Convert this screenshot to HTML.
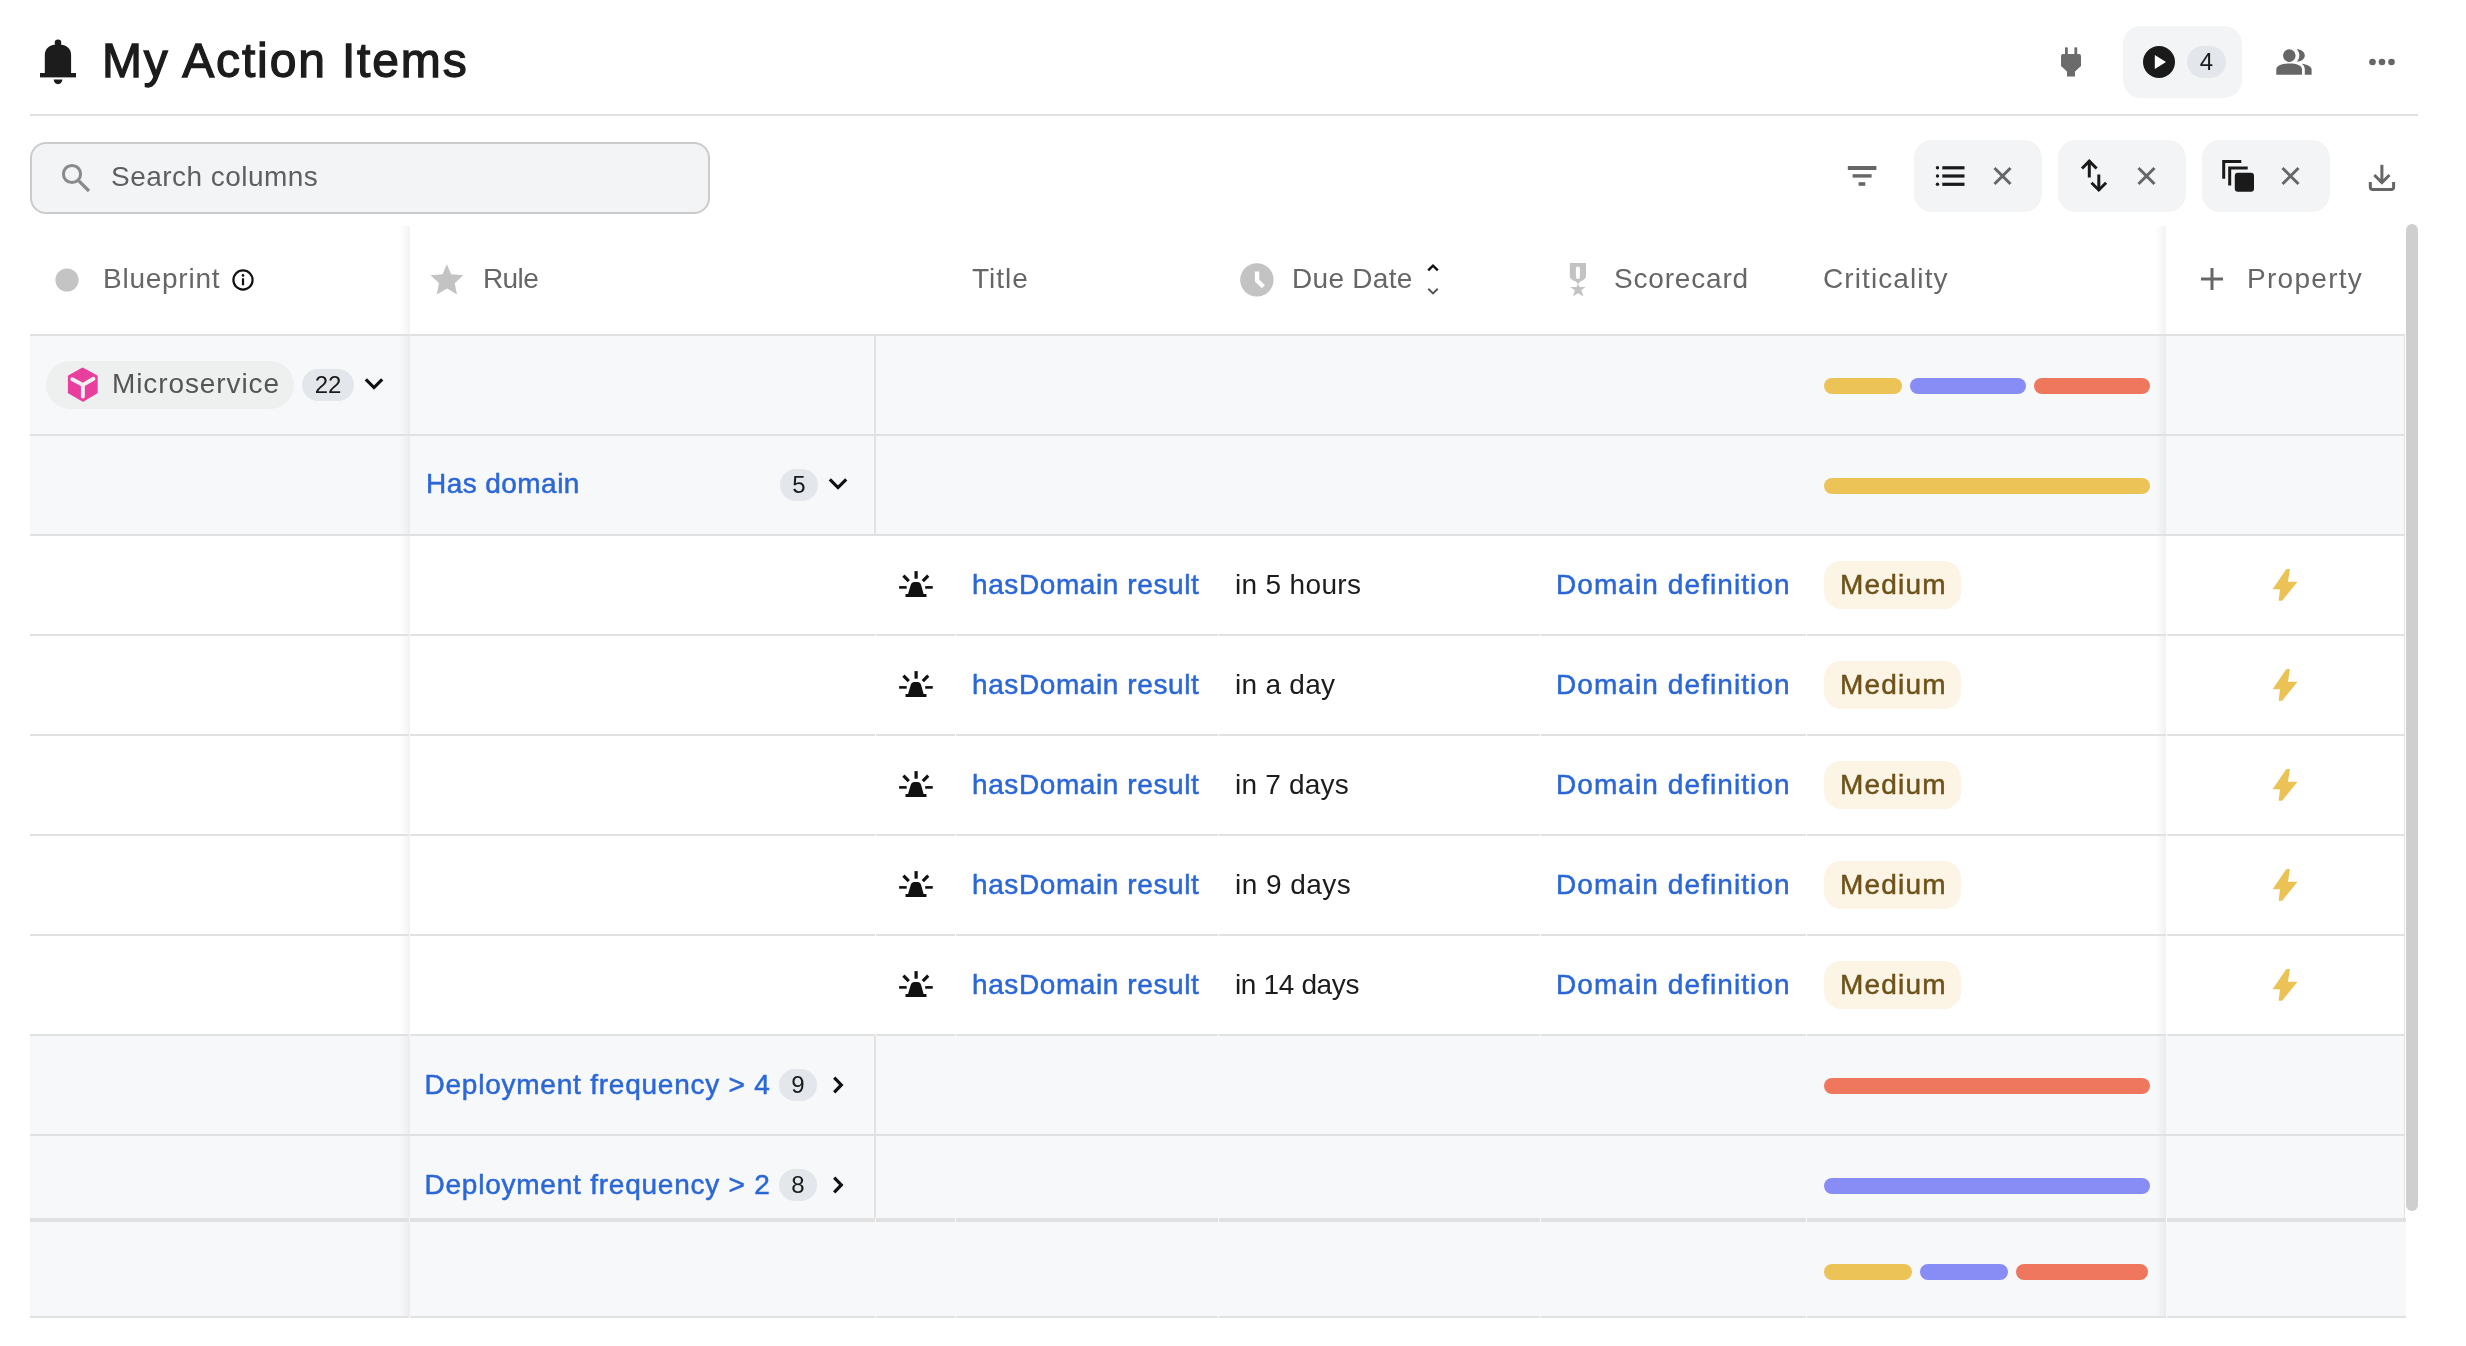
<!DOCTYPE html>
<html><head><meta charset="utf-8">
<style>
*{box-sizing:border-box;margin:0;padding:0}
html,body{width:2466px;height:1346px;overflow:hidden;background:#fff}
#root{will-change:transform;position:relative;width:2466px;height:1346px;overflow:hidden;background:#fff;font-family:"Liberation Sans",sans-serif}
.a{position:absolute}
.t{position:absolute;white-space:nowrap;line-height:1;font-size:28px;font-family:"Liberation Sans",sans-serif}
.hd{color:#666666}
.lk{color:#2b67d6;-webkit-text-stroke:0.5px #2b67d6}
.dk{color:#1c1c1c}
.grp{position:absolute;left:30px;width:2375px;height:100px;background:#f7f8fa}
.row{position:absolute;left:30px;width:2375px;height:100px;background:#fff}
.bd{position:absolute;left:30px;width:2375px;height:2px;background:#e1e1e2}
.bar{position:absolute;height:16px;border-radius:8px}
.y{background:#ecc356}.b{background:#888cf5}.r{background:#ee775d}
.chip{position:absolute;top:140px;height:72px;width:128px;border-radius:18px;background:#f3f4f6}
.badge{position:absolute;height:32px;border-radius:16px;background:#e3e6ea;color:#1a1a1a;font-size:24px;line-height:32px;text-align:center}
.med{position:absolute;left:1824px;width:137px;height:48px;border-radius:17px;background:#fcf5e6}
.shL{position:absolute;width:10px;background:linear-gradient(to right,rgba(0,0,0,0),rgba(0,0,0,0.05))}
</style></head>
<body><div id="root">

<!-- ===== Top header ===== -->
<svg class="a" style="left:38px;top:38px" width="40" height="48" viewBox="0 0 40 48">
  <circle cx="20" cy="4.8" r="3.3" fill="#1c1c1c"/>
  <path d="M6.8 35 V17 C6.8 10 12.5 6.3 20 6.3 C27.5 6.3 33.1 10 33.1 17 V35 Z" fill="#1c1c1c"/>
  <rect x="2" y="35" width="36" height="4.4" fill="#1c1c1c"/>
  <path d="M15.6 41.6 H24.5 C24 44.6 22.3 46.2 20 46.2 C17.7 46.2 16 44.6 15.6 41.6 Z" fill="#1c1c1c"/>
</svg>
<div class="t dk" style="left:102px;top:37px;font-size:48px;font-weight:400;color:#1c1c1c;-webkit-text-stroke:1.3px #1c1c1c;letter-spacing:1.85px">My Action Items</div>

<!-- plug -->
<svg class="a" style="left:2060px;top:46px" width="24" height="32" viewBox="0 0 24 32">
  <rect x="5" y="1.4" width="2.8" height="8" fill="#6b6b6b"/>
  <rect x="14.4" y="1.4" width="2.8" height="8" fill="#6b6b6b"/>
  <path d="M1 10 Q1 8 3 8 H19 Q21 8 21 10 V20 L15 25.4 V30.4 H7 V25.4 L1 20 Z" fill="#6b6b6b"/>
</svg>
<!-- play chip -->
<div class="a" style="left:2123px;top:26px;width:119px;height:72px;border-radius:18px;background:#f3f4f6"></div>
<svg class="a" style="left:2143px;top:46px" width="32" height="32" viewBox="0 0 32 32">
  <circle cx="16" cy="16" r="16" fill="#1a1a1a"/>
  <path d="M11.8 9 L23 16 L11.8 23 Z" fill="#fff"/>
</svg>
<div class="badge" style="left:2187px;top:46px;width:39px;">4</div>
<!-- people -->
<svg class="a" style="left:2274px;top:46px" width="40" height="32" viewBox="0 0 40 32">
  <circle cx="15.3" cy="9.6" r="6.3" fill="#666"/>
  <path d="M2.3 28.7 V23.5 C2.3 19.6 8 17.6 15.3 17.6 C22.6 17.6 28 19.6 28 23.5 V28.7 Z" fill="#666"/>
  <path d="M22.8 3.3 C27 3.3 30.8 6 30.8 9.6 C30.8 13.2 27 15.8 22.8 15.8 C24.5 14 25.3 12 25.3 9.6 C25.3 7.2 24.5 5.2 22.8 3.3 Z" fill="#666"/>
  <path d="M27.8 17.8 C32.6 18.6 37.6 20.3 37.6 23.5 V28.7 H30.8 V23.5 C30.8 21 29.8 19.2 27.8 17.8 Z" fill="#666"/>
</svg>
<!-- more dots -->
<svg class="a" style="left:2366px;top:56px" width="32" height="12" viewBox="0 0 32 12">
  <circle cx="6.5" cy="6" r="3.3" fill="#666"/><circle cx="16" cy="6" r="3.3" fill="#666"/><circle cx="25.5" cy="6" r="3.3" fill="#666"/>
</svg>

<div class="a" style="left:30px;top:114px;width:2388px;height:2px;background:#e2e2e2"></div>

<!-- ===== Toolbar ===== -->
<div class="a" style="left:30px;top:142px;width:680px;height:72px;border:2px solid #cbcbcb;border-radius:16px;background:#f3f4f6"></div>
<svg class="a" style="left:58px;top:160px" width="36" height="36" viewBox="0 0 36 36">
  <circle cx="14" cy="14" r="8.6" fill="none" stroke="#8a8a8a" stroke-width="3"/>
  <path d="M20.3 20.3 L31 31" stroke="#8a8a8a" stroke-width="3.2"/>
</svg>
<div class="t" style="left:111px;top:163px;color:#5f5f5f;letter-spacing:0.46px">Search columns</div>

<!-- filter icon -->
<svg class="a" style="left:1846px;top:162px" width="32" height="28" viewBox="0 0 32 28">
  <rect x="1.8" y="4" width="28.6" height="4" fill="#666"/>
  <rect x="6.6" y="12.2" width="19" height="3.4" fill="#666"/>
  <rect x="12.6" y="20.2" width="6.7" height="3.6" fill="#666"/>
</svg>
<div class="chip" style="left:1914px"></div>
<svg class="a" style="left:1932px;top:160px" width="36" height="32" viewBox="0 0 36 32">
  <circle cx="5.5" cy="7.8" r="1.7" fill="#1a1a1a"/><circle cx="5.5" cy="16" r="1.7" fill="#1a1a1a"/><circle cx="5.5" cy="24.3" r="1.7" fill="#1a1a1a"/>
  <rect x="10.3" y="6.2" width="22.2" height="3.2" fill="#1a1a1a"/>
  <rect x="10.3" y="14.4" width="22.2" height="3.2" fill="#1a1a1a"/>
  <rect x="10.3" y="22.7" width="22.2" height="3.2" fill="#1a1a1a"/>
</svg>
<svg class="a" style="left:1990px;top:164px" width="24" height="24" viewBox="0 0 24 24">
  <path d="M4.5 4 L20.5 20 M20.5 4 L4.5 20" stroke="#666" stroke-width="3"/>
</svg>
<div class="chip" style="left:2058px"></div>
<svg class="a" style="left:2078px;top:158px" width="32" height="36" viewBox="0 0 32 36">
  <path d="M11.3 2.5 L11.3 19.5" stroke="#1a1a1a" stroke-width="3"/>
  <path d="M4 10.5 L11.3 3.2 L18.6 10.5" fill="none" stroke="#1a1a1a" stroke-width="3"/>
  <path d="M20.8 16.5 L20.8 32.5" stroke="#1a1a1a" stroke-width="3"/>
  <path d="M13.5 24.8 L20.8 32 L28.1 24.8" fill="none" stroke="#1a1a1a" stroke-width="3"/>
</svg>
<svg class="a" style="left:2134px;top:164px" width="24" height="24" viewBox="0 0 24 24">
  <path d="M4.5 4 L20.5 20 M20.5 4 L4.5 20" stroke="#666" stroke-width="3"/>
</svg>
<div class="chip" style="left:2202px"></div>
<svg class="a" style="left:2220px;top:158px" width="36" height="36" viewBox="0 0 36 36">
  <path d="M3.7 20.8 V3.5 H21.3" fill="none" stroke="#1a1a1a" stroke-width="3"/>
  <path d="M9.7 27.5 V10 H27.7" fill="none" stroke="#1a1a1a" stroke-width="3"/>
  <rect x="14.8" y="14.8" width="19.2" height="19" rx="3" fill="#1a1a1a"/>
</svg>
<svg class="a" style="left:2278px;top:164px" width="24" height="24" viewBox="0 0 24 24">
  <path d="M4.5 4 L20.5 20 M20.5 4 L4.5 20" stroke="#666" stroke-width="3"/>
</svg>
<!-- download -->
<svg class="a" style="left:2366px;top:162px" width="32" height="32" viewBox="0 0 32 32">
  <path d="M15.9 2.8 V20" stroke="#666" stroke-width="3"/>
  <path d="M8.3 13 L15.9 20.6 L23.5 13" fill="none" stroke="#666" stroke-width="3"/>
  <path d="M4.3 20 V25 C4.3 26.6 5.2 27.4 6.8 27.4 H25.1 C26.7 27.4 27.6 26.6 27.6 25 V20" fill="none" stroke="#666" stroke-width="3"/>
</svg>

<!-- ===== Table ===== -->
<!--TABLE-->
<div class="bd" style="top:334px"></div>
<div class="shL" style="left:400px;top:226px;height:108px"></div>
<div class="shL" style="left:2156px;top:226px;height:108px"></div>
<svg class="a" style="left:55px;top:268px" width="24" height="24" viewBox="0 0 24 24"><circle cx="12" cy="12" r="11.6" fill="#c4c4c4"/></svg>
<div class="t hd" style="left:103px;top:265px;letter-spacing:0.75px">Blueprint</div>
<svg class="a" style="left:231px;top:268px" width="24" height="24" viewBox="0 0 24 24"><circle cx="12" cy="12" r="9.6" fill="none" stroke="#111" stroke-width="2.2"/><rect x="10.9" y="10.3" width="2.2" height="7" fill="#111"/><circle cx="12" cy="7.4" r="1.3" fill="#111"/></svg>
<svg class="a" style="left:429px;top:262px" width="36" height="36" viewBox="0 0 36 36"><path d="M17.9 2.2 L22.1 12.3 L34.2 13.3 L25.7 21.2 L28 32.6 L18.2 26.6 L7.7 32.6 L10 20.9 L1.4 13.3 L13.5 12.3 Z" fill="#c3c3c3"/></svg>
<div class="t hd" style="left:483px;top:265px;letter-spacing:-0.6px">Rule</div>
<div class="t hd" style="left:972px;top:265px;letter-spacing:1px">Title</div>
<svg class="a" style="left:1240px;top:263px" width="34" height="34" viewBox="0 0 34 34"><circle cx="16.9" cy="16.9" r="16.7" fill="#c3c3c3"/><path d="M17.05 8.4 V17.6 L23.4 23.6" fill="none" stroke="#fff" stroke-width="4.3"/></svg>
<div class="t hd" style="left:1292px;top:265px;letter-spacing:0.3px">Due Date</div>
<svg class="a" style="left:1424px;top:260px" width="18" height="38" viewBox="0 0 18 38"><path d="M4.2 10.4 L9 5.6 L13.8 10.4" fill="none" stroke="#111" stroke-width="2.4"/><path d="M4.3 28.8 L9 33.4 L13.7 28.8" fill="none" stroke="#555" stroke-width="2"/></svg>
<svg class="a" style="left:1566px;top:262px" width="24" height="36" viewBox="0 0 24 36"><path d="M3.8 1.1 H20 V14.3 C20 16.8 17.5 18.3 14.2 19.6 L12.6 21.2 L12 22.8 L11.4 21.2 L9.8 19.6 C6.5 18.3 3.8 16.8 3.8 14.3 Z" fill="#c3c3c3"/><rect x="9.9" y="4.5" width="4" height="12.4" rx="2" fill="#fff"/><path d="M12 21.6 L13.5 25 L19.6 25.1 L15.3 28.3 L17.5 34.4 L12 31.2 L7.1 34.3 L8.8 28.3 L4.1 25.1 L10.5 25 Z" fill="#c3c3c3"/></svg>
<div class="t hd" style="left:1614px;top:265px;letter-spacing:0.82px">Scorecard</div>
<div class="t hd" style="left:1823px;top:265px;letter-spacing:1.1px">Criticality</div>
<svg class="a" style="left:2198px;top:266px" width="28" height="26" viewBox="0 0 28 26"><path d="M14 2 V24 M3 13 H25" stroke="#666" stroke-width="3"/></svg>
<div class="t hd" style="left:2247px;top:265px;letter-spacing:1.29px">Property</div>
<div class="grp" style="top:336px"></div>
<div class="bd" style="top:434px"></div>
<div class="a" style="left:874px;top:336px;width:2px;height:98px;background:#e3e3e4"></div>
<div class="shL" style="left:400px;top:336px;height:98px"></div>
<div class="shL" style="left:2156px;top:336px;height:98px"></div>
<div class="a" style="left:46px;top:361px;width:248px;height:48px;border-radius:24px;background:#eef0f0"></div>
<svg class="a" style="left:66px;top:366px" width="34" height="38" viewBox="0 0 34 38"><path d="M16.6 3 L30.4 10.3 V26.4 L17 34.4 L3.2 26.4 V10.3 Z" fill="#e83f9f" stroke="#e83f9f" stroke-width="2.6" stroke-linejoin="round"/><path d="M6.3 13.3 L16.9 18.9 L27.5 12.7 M16.9 18.9 V30.6" fill="none" stroke="#f1f1f1" stroke-width="3.9" stroke-linecap="round" stroke-linejoin="round"/></svg>
<div class="t" style="left:112px;top:370px;color:#555;letter-spacing:0.9px">Microservice</div>
<div class="badge" style="left:302px;top:369px;width:52px">22</div>
<svg class="a" style="left:364px;top:376px" width="20" height="16" viewBox="0 0 20 16"><path d="M1.8 3.4 L10 11.6 L18.2 3.4" fill="none" stroke="#111" stroke-width="3.2"/></svg>
<div class="bar y" style="left:1824px;top:378px;width:78px"></div>
<div class="bar b" style="left:1910px;top:378px;width:116px"></div>
<div class="bar r" style="left:2034px;top:378px;width:116px"></div>
<div class="grp" style="top:436px"></div>
<div class="bd" style="top:534px"></div>
<div class="a" style="left:874px;top:436px;width:2px;height:98px;background:#e3e3e4"></div>
<div class="shL" style="left:400px;top:436px;height:98px"></div>
<div class="shL" style="left:2156px;top:436px;height:98px"></div>
<div class="t lk" style="left:426px;top:470px;letter-spacing:0.44px">Has domain</div>
<div class="badge" style="left:780px;top:469px;width:38px">5</div>
<svg class="a" style="left:828px;top:476px" width="20" height="16" viewBox="0 0 20 16"><path d="M1.8 3.4 L10 11.6 L18.2 3.4" fill="none" stroke="#111" stroke-width="3.2"/></svg>
<div class="bar y" style="left:1824px;top:478px;width:326px"></div>
<div class="row" style="top:536px"></div>
<div class="bd" style="top:634px"></div>
<div class="a" style="left:409px;top:634px;width:1px;height:2px;background:#fff"></div>
<div class="a" style="left:875px;top:634px;width:1px;height:2px;background:#fff"></div>
<div class="a" style="left:955px;top:634px;width:1px;height:2px;background:#fff"></div>
<div class="a" style="left:1218px;top:634px;width:1px;height:2px;background:#fff"></div>
<div class="a" style="left:1540px;top:634px;width:1px;height:2px;background:#fff"></div>
<div class="a" style="left:1806px;top:634px;width:1px;height:2px;background:#fff"></div>
<div class="a" style="left:2166px;top:634px;width:1px;height:2px;background:#fff"></div>
<div class="shL" style="left:400px;top:536px;height:98px"></div>
<div class="shL" style="left:2156px;top:536px;height:98px"></div>
<svg class="a" style="left:894px;top:566px" width="44" height="36" viewBox="0 0 44 36"><rect x="20.5" y="5.1" width="3.2" height="7.6" fill="#111"/><path d="M9.4 9.6 L14.8 15.1 M34.2 9.6 L28.8 15.1" stroke="#111" stroke-width="3.2"/><rect x="5.1" y="20.1" width="7.6" height="2.6" fill="#111"/><rect x="31.2" y="20.1" width="7.6" height="2.6" fill="#111"/><path d="M13.9 28.4 L16.7 18.9 Q17.6 16 20.4 16 H23.5 Q26.3 16 27.1 18.9 L29.8 28.4 Z" fill="#111"/><rect x="11.5" y="28" width="21" height="3" fill="#111"/></svg>
<div class="t lk" style="left:972px;top:570.6px;letter-spacing:0.59px">hasDomain result</div>
<div class="t dk" style="left:1235px;top:570.6px;letter-spacing:0.33px">in 5 hours</div>
<div class="t lk" style="left:1556px;top:570.6px;letter-spacing:1.08px">Domain definition</div>
<div class="med" style="top:561px"></div>
<div class="t" style="left:1840px;top:570.6px;color:#6e521a;-webkit-text-stroke:0.5px #6e521a;letter-spacing:1.2px">Medium</div>
<svg class="a" style="left:2266px;top:564px" width="38" height="42" viewBox="0 0 38 42"><path d="M19.7 6 Q20.5 5.1 21.6 5.1 H23.9 L22 17.8 H31.6 L16.4 36.4 Q16 36.7 15.3 36.7 H12.6 L14 25.3 H6.6 Z" fill="#ebc354"/></svg>
<div class="row" style="top:636px"></div>
<div class="bd" style="top:734px"></div>
<div class="a" style="left:409px;top:734px;width:1px;height:2px;background:#fff"></div>
<div class="a" style="left:875px;top:734px;width:1px;height:2px;background:#fff"></div>
<div class="a" style="left:955px;top:734px;width:1px;height:2px;background:#fff"></div>
<div class="a" style="left:1218px;top:734px;width:1px;height:2px;background:#fff"></div>
<div class="a" style="left:1540px;top:734px;width:1px;height:2px;background:#fff"></div>
<div class="a" style="left:1806px;top:734px;width:1px;height:2px;background:#fff"></div>
<div class="a" style="left:2166px;top:734px;width:1px;height:2px;background:#fff"></div>
<div class="shL" style="left:400px;top:636px;height:98px"></div>
<div class="shL" style="left:2156px;top:636px;height:98px"></div>
<svg class="a" style="left:894px;top:666px" width="44" height="36" viewBox="0 0 44 36"><rect x="20.5" y="5.1" width="3.2" height="7.6" fill="#111"/><path d="M9.4 9.6 L14.8 15.1 M34.2 9.6 L28.8 15.1" stroke="#111" stroke-width="3.2"/><rect x="5.1" y="20.1" width="7.6" height="2.6" fill="#111"/><rect x="31.2" y="20.1" width="7.6" height="2.6" fill="#111"/><path d="M13.9 28.4 L16.7 18.9 Q17.6 16 20.4 16 H23.5 Q26.3 16 27.1 18.9 L29.8 28.4 Z" fill="#111"/><rect x="11.5" y="28" width="21" height="3" fill="#111"/></svg>
<div class="t lk" style="left:972px;top:670.6px;letter-spacing:0.59px">hasDomain result</div>
<div class="t dk" style="left:1235px;top:670.6px;letter-spacing:0.29px">in a day</div>
<div class="t lk" style="left:1556px;top:670.6px;letter-spacing:1.08px">Domain definition</div>
<div class="med" style="top:661px"></div>
<div class="t" style="left:1840px;top:670.6px;color:#6e521a;-webkit-text-stroke:0.5px #6e521a;letter-spacing:1.2px">Medium</div>
<svg class="a" style="left:2266px;top:664px" width="38" height="42" viewBox="0 0 38 42"><path d="M19.7 6 Q20.5 5.1 21.6 5.1 H23.9 L22 17.8 H31.6 L16.4 36.4 Q16 36.7 15.3 36.7 H12.6 L14 25.3 H6.6 Z" fill="#ebc354"/></svg>
<div class="row" style="top:736px"></div>
<div class="bd" style="top:834px"></div>
<div class="a" style="left:409px;top:834px;width:1px;height:2px;background:#fff"></div>
<div class="a" style="left:875px;top:834px;width:1px;height:2px;background:#fff"></div>
<div class="a" style="left:955px;top:834px;width:1px;height:2px;background:#fff"></div>
<div class="a" style="left:1218px;top:834px;width:1px;height:2px;background:#fff"></div>
<div class="a" style="left:1540px;top:834px;width:1px;height:2px;background:#fff"></div>
<div class="a" style="left:1806px;top:834px;width:1px;height:2px;background:#fff"></div>
<div class="a" style="left:2166px;top:834px;width:1px;height:2px;background:#fff"></div>
<div class="shL" style="left:400px;top:736px;height:98px"></div>
<div class="shL" style="left:2156px;top:736px;height:98px"></div>
<svg class="a" style="left:894px;top:766px" width="44" height="36" viewBox="0 0 44 36"><rect x="20.5" y="5.1" width="3.2" height="7.6" fill="#111"/><path d="M9.4 9.6 L14.8 15.1 M34.2 9.6 L28.8 15.1" stroke="#111" stroke-width="3.2"/><rect x="5.1" y="20.1" width="7.6" height="2.6" fill="#111"/><rect x="31.2" y="20.1" width="7.6" height="2.6" fill="#111"/><path d="M13.9 28.4 L16.7 18.9 Q17.6 16 20.4 16 H23.5 Q26.3 16 27.1 18.9 L29.8 28.4 Z" fill="#111"/><rect x="11.5" y="28" width="21" height="3" fill="#111"/></svg>
<div class="t lk" style="left:972px;top:770.6px;letter-spacing:0.59px">hasDomain result</div>
<div class="t dk" style="left:1235px;top:770.6px;letter-spacing:0.2px">in 7 days</div>
<div class="t lk" style="left:1556px;top:770.6px;letter-spacing:1.08px">Domain definition</div>
<div class="med" style="top:761px"></div>
<div class="t" style="left:1840px;top:770.6px;color:#6e521a;-webkit-text-stroke:0.5px #6e521a;letter-spacing:1.2px">Medium</div>
<svg class="a" style="left:2266px;top:764px" width="38" height="42" viewBox="0 0 38 42"><path d="M19.7 6 Q20.5 5.1 21.6 5.1 H23.9 L22 17.8 H31.6 L16.4 36.4 Q16 36.7 15.3 36.7 H12.6 L14 25.3 H6.6 Z" fill="#ebc354"/></svg>
<div class="row" style="top:836px"></div>
<div class="bd" style="top:934px"></div>
<div class="a" style="left:409px;top:934px;width:1px;height:2px;background:#fff"></div>
<div class="a" style="left:875px;top:934px;width:1px;height:2px;background:#fff"></div>
<div class="a" style="left:955px;top:934px;width:1px;height:2px;background:#fff"></div>
<div class="a" style="left:1218px;top:934px;width:1px;height:2px;background:#fff"></div>
<div class="a" style="left:1540px;top:934px;width:1px;height:2px;background:#fff"></div>
<div class="a" style="left:1806px;top:934px;width:1px;height:2px;background:#fff"></div>
<div class="a" style="left:2166px;top:934px;width:1px;height:2px;background:#fff"></div>
<div class="shL" style="left:400px;top:836px;height:98px"></div>
<div class="shL" style="left:2156px;top:836px;height:98px"></div>
<svg class="a" style="left:894px;top:866px" width="44" height="36" viewBox="0 0 44 36"><rect x="20.5" y="5.1" width="3.2" height="7.6" fill="#111"/><path d="M9.4 9.6 L14.8 15.1 M34.2 9.6 L28.8 15.1" stroke="#111" stroke-width="3.2"/><rect x="5.1" y="20.1" width="7.6" height="2.6" fill="#111"/><rect x="31.2" y="20.1" width="7.6" height="2.6" fill="#111"/><path d="M13.9 28.4 L16.7 18.9 Q17.6 16 20.4 16 H23.5 Q26.3 16 27.1 18.9 L29.8 28.4 Z" fill="#111"/><rect x="11.5" y="28" width="21" height="3" fill="#111"/></svg>
<div class="t lk" style="left:972px;top:870.6px;letter-spacing:0.59px">hasDomain result</div>
<div class="t dk" style="left:1235px;top:870.6px;letter-spacing:0.47px">in 9 days</div>
<div class="t lk" style="left:1556px;top:870.6px;letter-spacing:1.08px">Domain definition</div>
<div class="med" style="top:861px"></div>
<div class="t" style="left:1840px;top:870.6px;color:#6e521a;-webkit-text-stroke:0.5px #6e521a;letter-spacing:1.2px">Medium</div>
<svg class="a" style="left:2266px;top:864px" width="38" height="42" viewBox="0 0 38 42"><path d="M19.7 6 Q20.5 5.1 21.6 5.1 H23.9 L22 17.8 H31.6 L16.4 36.4 Q16 36.7 15.3 36.7 H12.6 L14 25.3 H6.6 Z" fill="#ebc354"/></svg>
<div class="row" style="top:936px"></div>
<div class="bd" style="top:1034px"></div>
<div class="a" style="left:409px;top:1034px;width:1px;height:2px;background:#fff"></div>
<div class="a" style="left:875px;top:1034px;width:1px;height:2px;background:#fff"></div>
<div class="a" style="left:955px;top:1034px;width:1px;height:2px;background:#fff"></div>
<div class="a" style="left:1218px;top:1034px;width:1px;height:2px;background:#fff"></div>
<div class="a" style="left:1540px;top:1034px;width:1px;height:2px;background:#fff"></div>
<div class="a" style="left:1806px;top:1034px;width:1px;height:2px;background:#fff"></div>
<div class="a" style="left:2166px;top:1034px;width:1px;height:2px;background:#fff"></div>
<div class="shL" style="left:400px;top:936px;height:98px"></div>
<div class="shL" style="left:2156px;top:936px;height:98px"></div>
<svg class="a" style="left:894px;top:966px" width="44" height="36" viewBox="0 0 44 36"><rect x="20.5" y="5.1" width="3.2" height="7.6" fill="#111"/><path d="M9.4 9.6 L14.8 15.1 M34.2 9.6 L28.8 15.1" stroke="#111" stroke-width="3.2"/><rect x="5.1" y="20.1" width="7.6" height="2.6" fill="#111"/><rect x="31.2" y="20.1" width="7.6" height="2.6" fill="#111"/><path d="M13.9 28.4 L16.7 18.9 Q17.6 16 20.4 16 H23.5 Q26.3 16 27.1 18.9 L29.8 28.4 Z" fill="#111"/><rect x="11.5" y="28" width="21" height="3" fill="#111"/></svg>
<div class="t lk" style="left:972px;top:970.6px;letter-spacing:0.59px">hasDomain result</div>
<div class="t dk" style="left:1235px;top:970.6px;letter-spacing:-0.35px">in 14 days</div>
<div class="t lk" style="left:1556px;top:970.6px;letter-spacing:1.08px">Domain definition</div>
<div class="med" style="top:961px"></div>
<div class="t" style="left:1840px;top:970.6px;color:#6e521a;-webkit-text-stroke:0.5px #6e521a;letter-spacing:1.2px">Medium</div>
<svg class="a" style="left:2266px;top:964px" width="38" height="42" viewBox="0 0 38 42"><path d="M19.7 6 Q20.5 5.1 21.6 5.1 H23.9 L22 17.8 H31.6 L16.4 36.4 Q16 36.7 15.3 36.7 H12.6 L14 25.3 H6.6 Z" fill="#ebc354"/></svg>
<div class="grp" style="top:1036px"></div>
<div class="bd" style="top:1134px"></div>
<div class="a" style="left:874px;top:1036px;width:2px;height:98px;background:#e3e3e4"></div>
<div class="shL" style="left:400px;top:1036px;height:98px"></div>
<div class="shL" style="left:2156px;top:1036px;height:98px"></div>
<div class="t lk" style="left:424.5px;top:1071px;letter-spacing:0.77px">Deployment frequency &gt; 4</div>
<div class="badge" style="left:779px;top:1069px;width:38px">9</div>
<svg class="a" style="left:828px;top:1075px" width="20" height="20" viewBox="0 0 20 20"><path d="M6.2 2.6 L13.3 9.9 L6.2 17.3" fill="none" stroke="#111" stroke-width="3.2"/></svg>
<div class="bar r" style="left:1824px;top:1078px;width:326px"></div>
<div class="grp" style="top:1136px;height:82px"></div>
<div class="a" style="left:874px;top:1136px;width:2px;height:82px;background:#e3e3e4"></div>
<div class="shL" style="left:400px;top:1136px;height:82px"></div>
<div class="shL" style="left:2156px;top:1136px;height:82px"></div>
<div class="t lk" style="left:424.5px;top:1171px;letter-spacing:0.77px">Deployment frequency &gt; 2</div>
<div class="badge" style="left:779px;top:1169px;width:38px">8</div>
<svg class="a" style="left:828px;top:1175px" width="20" height="20" viewBox="0 0 20 20"><path d="M6.2 2.6 L13.3 9.9 L6.2 17.3" fill="none" stroke="#111" stroke-width="3.2"/></svg>
<div class="bar b" style="left:1824px;top:1178px;width:326px"></div>
<div class="a" style="left:30px;top:1218px;width:2376px;height:4px;background:#e1e1e2"></div>
<div class="a" style="left:30px;top:1222px;width:2376px;height:94px;background:#f7f8fa"></div>
<div class="a" style="left:30px;top:1316px;width:2376px;height:2px;background:#e1e1e2"></div>
<div class="a" style="left:409px;top:1316px;width:1px;height:2px;background:#fff"></div>
<div class="a" style="left:875px;top:1316px;width:1px;height:2px;background:#fff"></div>
<div class="a" style="left:955px;top:1316px;width:1px;height:2px;background:#fff"></div>
<div class="a" style="left:1218px;top:1316px;width:1px;height:2px;background:#fff"></div>
<div class="a" style="left:1540px;top:1316px;width:1px;height:2px;background:#fff"></div>
<div class="a" style="left:1806px;top:1316px;width:1px;height:2px;background:#fff"></div>
<div class="a" style="left:2166px;top:1316px;width:1px;height:2px;background:#fff"></div>
<div class="a" style="left:409px;top:1218px;width:1px;height:4px;background:#fff"></div>
<div class="a" style="left:875px;top:1218px;width:1px;height:4px;background:#fff"></div>
<div class="a" style="left:955px;top:1218px;width:1px;height:4px;background:#fff"></div>
<div class="a" style="left:1218px;top:1218px;width:1px;height:4px;background:#fff"></div>
<div class="a" style="left:1540px;top:1218px;width:1px;height:4px;background:#fff"></div>
<div class="a" style="left:1806px;top:1218px;width:1px;height:4px;background:#fff"></div>
<div class="a" style="left:2166px;top:1218px;width:1px;height:4px;background:#fff"></div>
<div class="shL" style="left:400px;top:1222px;height:94px"></div>
<div class="shL" style="left:2156px;top:1222px;height:94px"></div>
<div class="bar y" style="left:1824px;top:1264px;width:88px"></div>
<div class="bar b" style="left:1920px;top:1264px;width:88px"></div>
<div class="bar r" style="left:2016px;top:1264px;width:132px"></div>
<div class="a" style="left:2404px;top:336px;width:1px;height:882px;background:#e3e3e4"></div>
<div class="a" style="left:2406px;top:224px;width:12px;height:987px;border-radius:6px;background:#cfcfcf"></div>
<!--/TABLE-->
</div></body></html>
